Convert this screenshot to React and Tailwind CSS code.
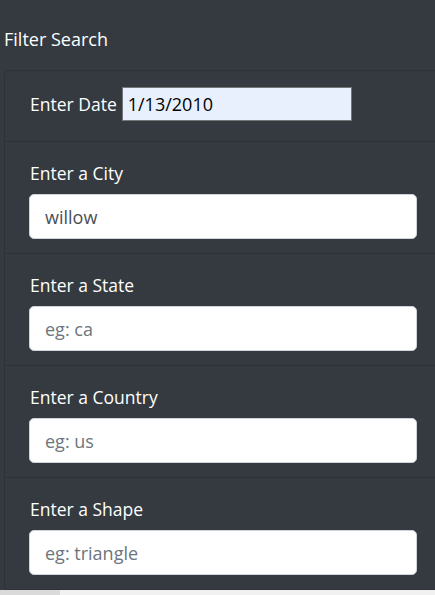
import { useState } from 'react';

const fields = [
  { label: "Enter a City", value: "willow", placeholder: "eg: willow" },
  { label: "Enter a State", value: "", placeholder: "eg: ca" },
  { label: "Enter a Country", value: "", placeholder: "eg: us" },
  { label: "Enter a Shape", value: "", placeholder: "eg: triangle" },
];

export default function App() {
  const [date, setDate] = useState("1/13/2010");
  const [values, setValues] = useState(fields.map(f => f.value));

  return (
    <div className="h-[595px] overflow-hidden bg-[#343a40] flex flex-col" style={{ fontFamily: '"Open Sans", sans-serif' }}>
      <div className="h-[590px] overflow-hidden">
        {/* HEADER */}
        <div className="h-[70px] flex items-center pl-[4px] pt-[8px]">
          <h5 className="text-[18px] text-white">Filter Search</h5>
        </div>

        {/* FILTER LIST */}
        <ul className="ml-[4px] w-[440px] border border-[#2d3237] rounded-tl-[4px]">
          <li className="h-[71px] flex items-center pl-[25px] pb-[4px] border-b border-[#2d3237]">
            <label className="text-[17.5px] text-white mr-[5px]">Enter Date</label>
            <input
              value={date}
              onChange={(e) => setDate(e.target.value)}
              className="w-[230px] h-[34px] bg-[#e8f0fe] border border-[#767676] px-[5px] text-[18px] text-black outline-none"
            />
          </li>
          {fields.map((f, i) => (
            <li key={f.label} className="h-[112px] pl-[24px] pt-[19px] border-b border-[#2d3237]">
              <label className="block pl-[1px] text-[17.5px] leading-[24px] text-white mb-[9px]">{f.label}</label>
              <input
                value={values[i]}
                placeholder={f.placeholder}
                onChange={(e) => setValues(values.map((v, j) => (j === i ? e.target.value : v)))}
                className="block w-[388px] h-[45px] bg-white border border-[#ced4da] rounded-[5px] px-[15px] text-[18px] text-[#495057] placeholder:text-[#6c757d] outline-none"
              />
            </li>
          ))}
        </ul>
      </div>

      {/* SCROLLBAR */}
      <div className="h-[5px] flex bg-[#f1f1f1]">
        <div className="w-[60px] bg-[#dadada]" />
      </div>
    </div>
  );
}
